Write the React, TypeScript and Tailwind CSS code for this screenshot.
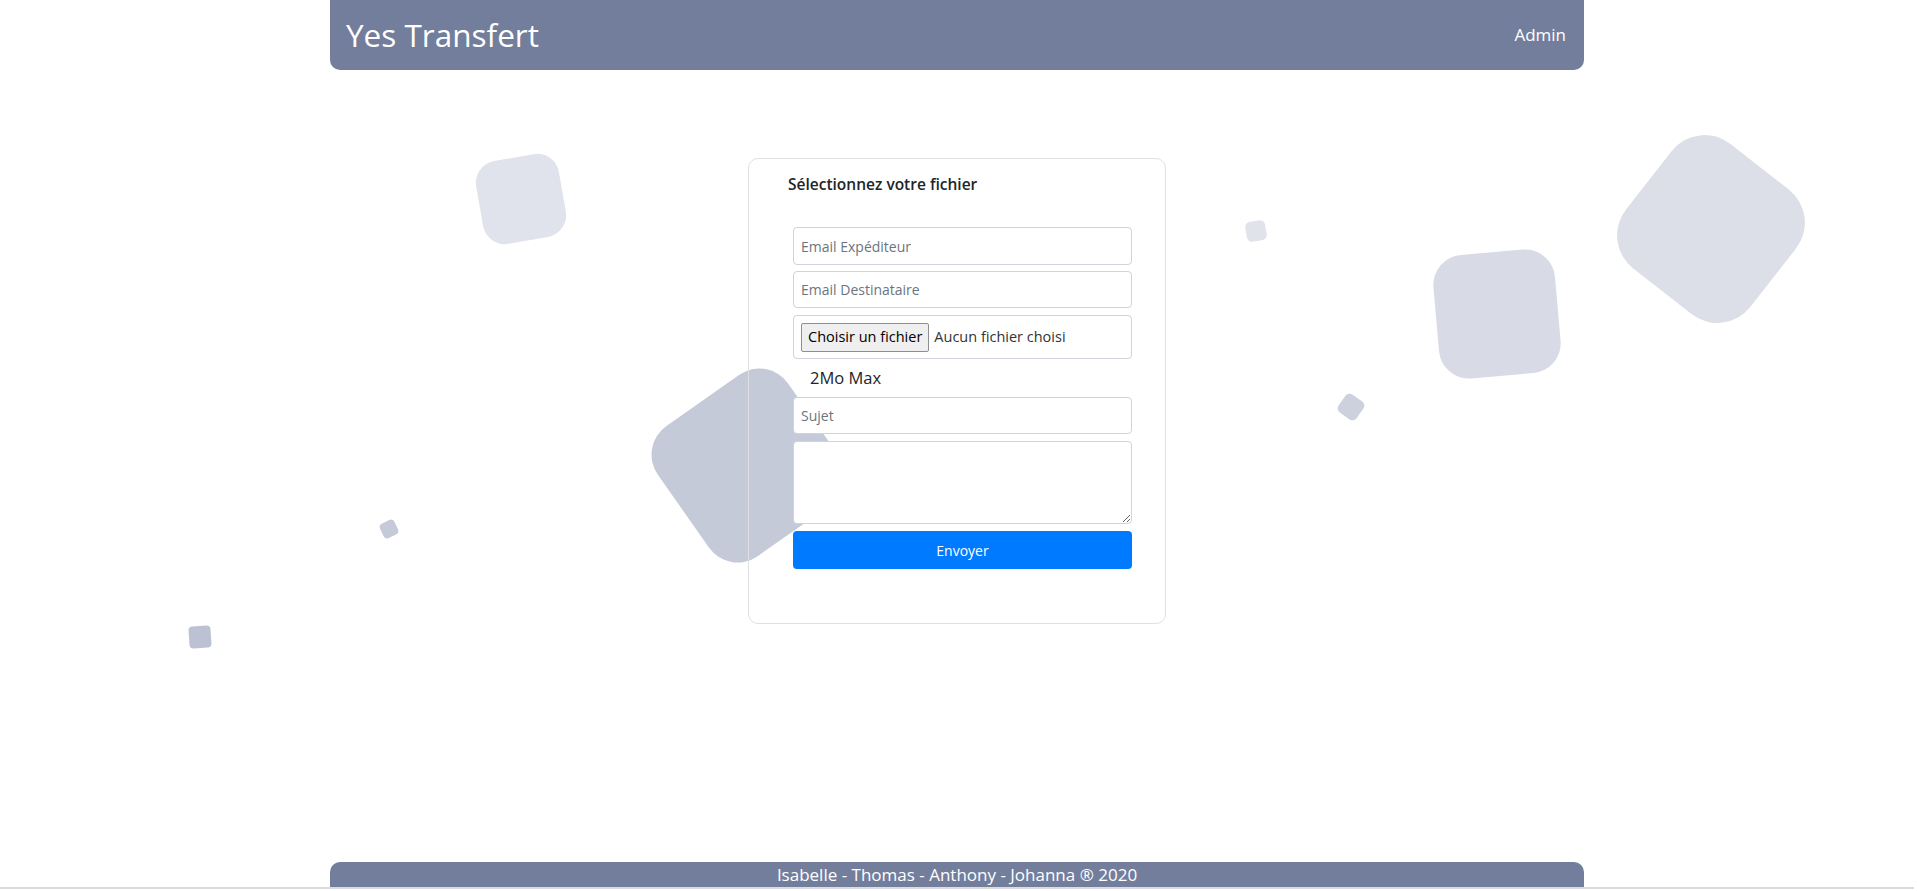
const shapes = [
  'left-[479px] top-[157px] w-[84px] h-[84px] rounded-[22px] rotate-[-10deg] bg-[#e0e3eb]',
  'left-[669px] top-[386px] w-[159px] h-[159px] rounded-[35px] rotate-[-35deg] bg-[#c5cad9]',
  'left-[1246px] top-[221px] w-[20px] h-[20px] rounded-[5px] rotate-[-10deg] bg-[#e0e3ea]',
  'left-[1436px] top-[252px] w-[122px] h-[124px] rounded-[30px] rotate-[-5deg] bg-[#d8dbe6]',
  'left-[1632px] top-[150px] w-[158px] h-[158px] rounded-[42px] rotate-[38deg] bg-[#dddfe8]',
  'left-[1340px] top-[396px] w-[22px] h-[22px] rounded-[5px] rotate-[35deg] bg-[#cdd1de]',
  'left-[381px] top-[521px] w-[16px] h-[16px] rounded-[4px] rotate-[-25deg] bg-[#c5cad9]',
  'left-[189px] top-[626px] w-[22px] h-[22px] rounded-[4px] rotate-[-4deg] bg-[#bcc2d4]',
];

const inputClass =
  'block w-full rounded-[4px] border border-[#ced4da] bg-white px-[7px] text-[14px] text-[#495057] placeholder:text-[#6c757d] outline-none';

export default function App() {
  return (
    <div className="relative flex h-[891px] w-[1914px] flex-col overflow-hidden bg-white font-['Open_Sans',sans-serif] text-[#212529]">
      {/* floating squares */}
      {shapes.map((cls) => (
        <div key={cls} className={`absolute z-0 ${cls}`} />
      ))}

      <header className="relative z-10 mx-auto flex h-[70px] w-[1254px] shrink-0 items-center justify-between rounded-b-[10px] bg-[#727e9c] pl-[16px] pr-[18px] text-white">
        <span className="text-[31.5px] leading-none">Yes Transfert</span>
        <span className="text-[17px]">Admin</span>
      </header>

      <main className="relative z-10 flex-1">
        <div className="mx-auto mt-[88px] h-[466px] w-[418px] rounded-[10px] border border-[#e0e0e3]">
          <h5 className="ml-[39px] mt-[13px] text-[15.5px] font-semibold leading-[24px]">Sélectionnez votre fichier</h5>

          <form className="ml-[44px] mt-[31px] flex w-[339px] flex-col">
            <input className={`${inputClass} h-[38px]`} placeholder="Email Expéditeur" />
            <input className={`${inputClass} mt-[6px] h-[37px]`} placeholder="Email Destinataire" />
            <div className="mt-[7px] flex h-[44px] items-center gap-[5px] rounded-[4px] border border-[#ced4da] bg-white pl-[7px]">
              <span className="flex h-[29px] items-center rounded-[2px] border border-[#8f8f8f] bg-[#efefef] px-[6px] text-[14.5px] text-black">
                Choisir un fichier
              </span>
              <span className="text-[14.5px] text-[#333]">Aucun fichier choisi</span>
            </div>
            <p className="ml-[17px] flex h-[38px] items-center text-[16.5px]">2Mo Max</p>
            <input className={`${inputClass} h-[37px]`} placeholder="Sujet" />
            <textarea className={`${inputClass} mt-[7px] h-[83px] py-[6px]`} />
            <button
              type="button"
              className="mt-[7px] h-[38px] rounded-[4px] bg-[#007bff] text-[14px] font-medium text-white"
            >
              Envoyer
            </button>
          </form>
        </div>
      </main>

      <footer className="relative z-10 mx-auto flex h-[25px] w-[1254px] shrink-0 items-center justify-center rounded-t-[10px] bg-[#727e9c] text-[17px] text-white">
        Isabelle - Thomas - Anthony - Johanna ® 2020
      </footer>
      <div className="relative z-10 h-[2px] w-[1917px] shrink-0 bg-[#dcdcdc]" />
      <div className="h-[2px] shrink-0 bg-white" />
    </div>
  );
}
